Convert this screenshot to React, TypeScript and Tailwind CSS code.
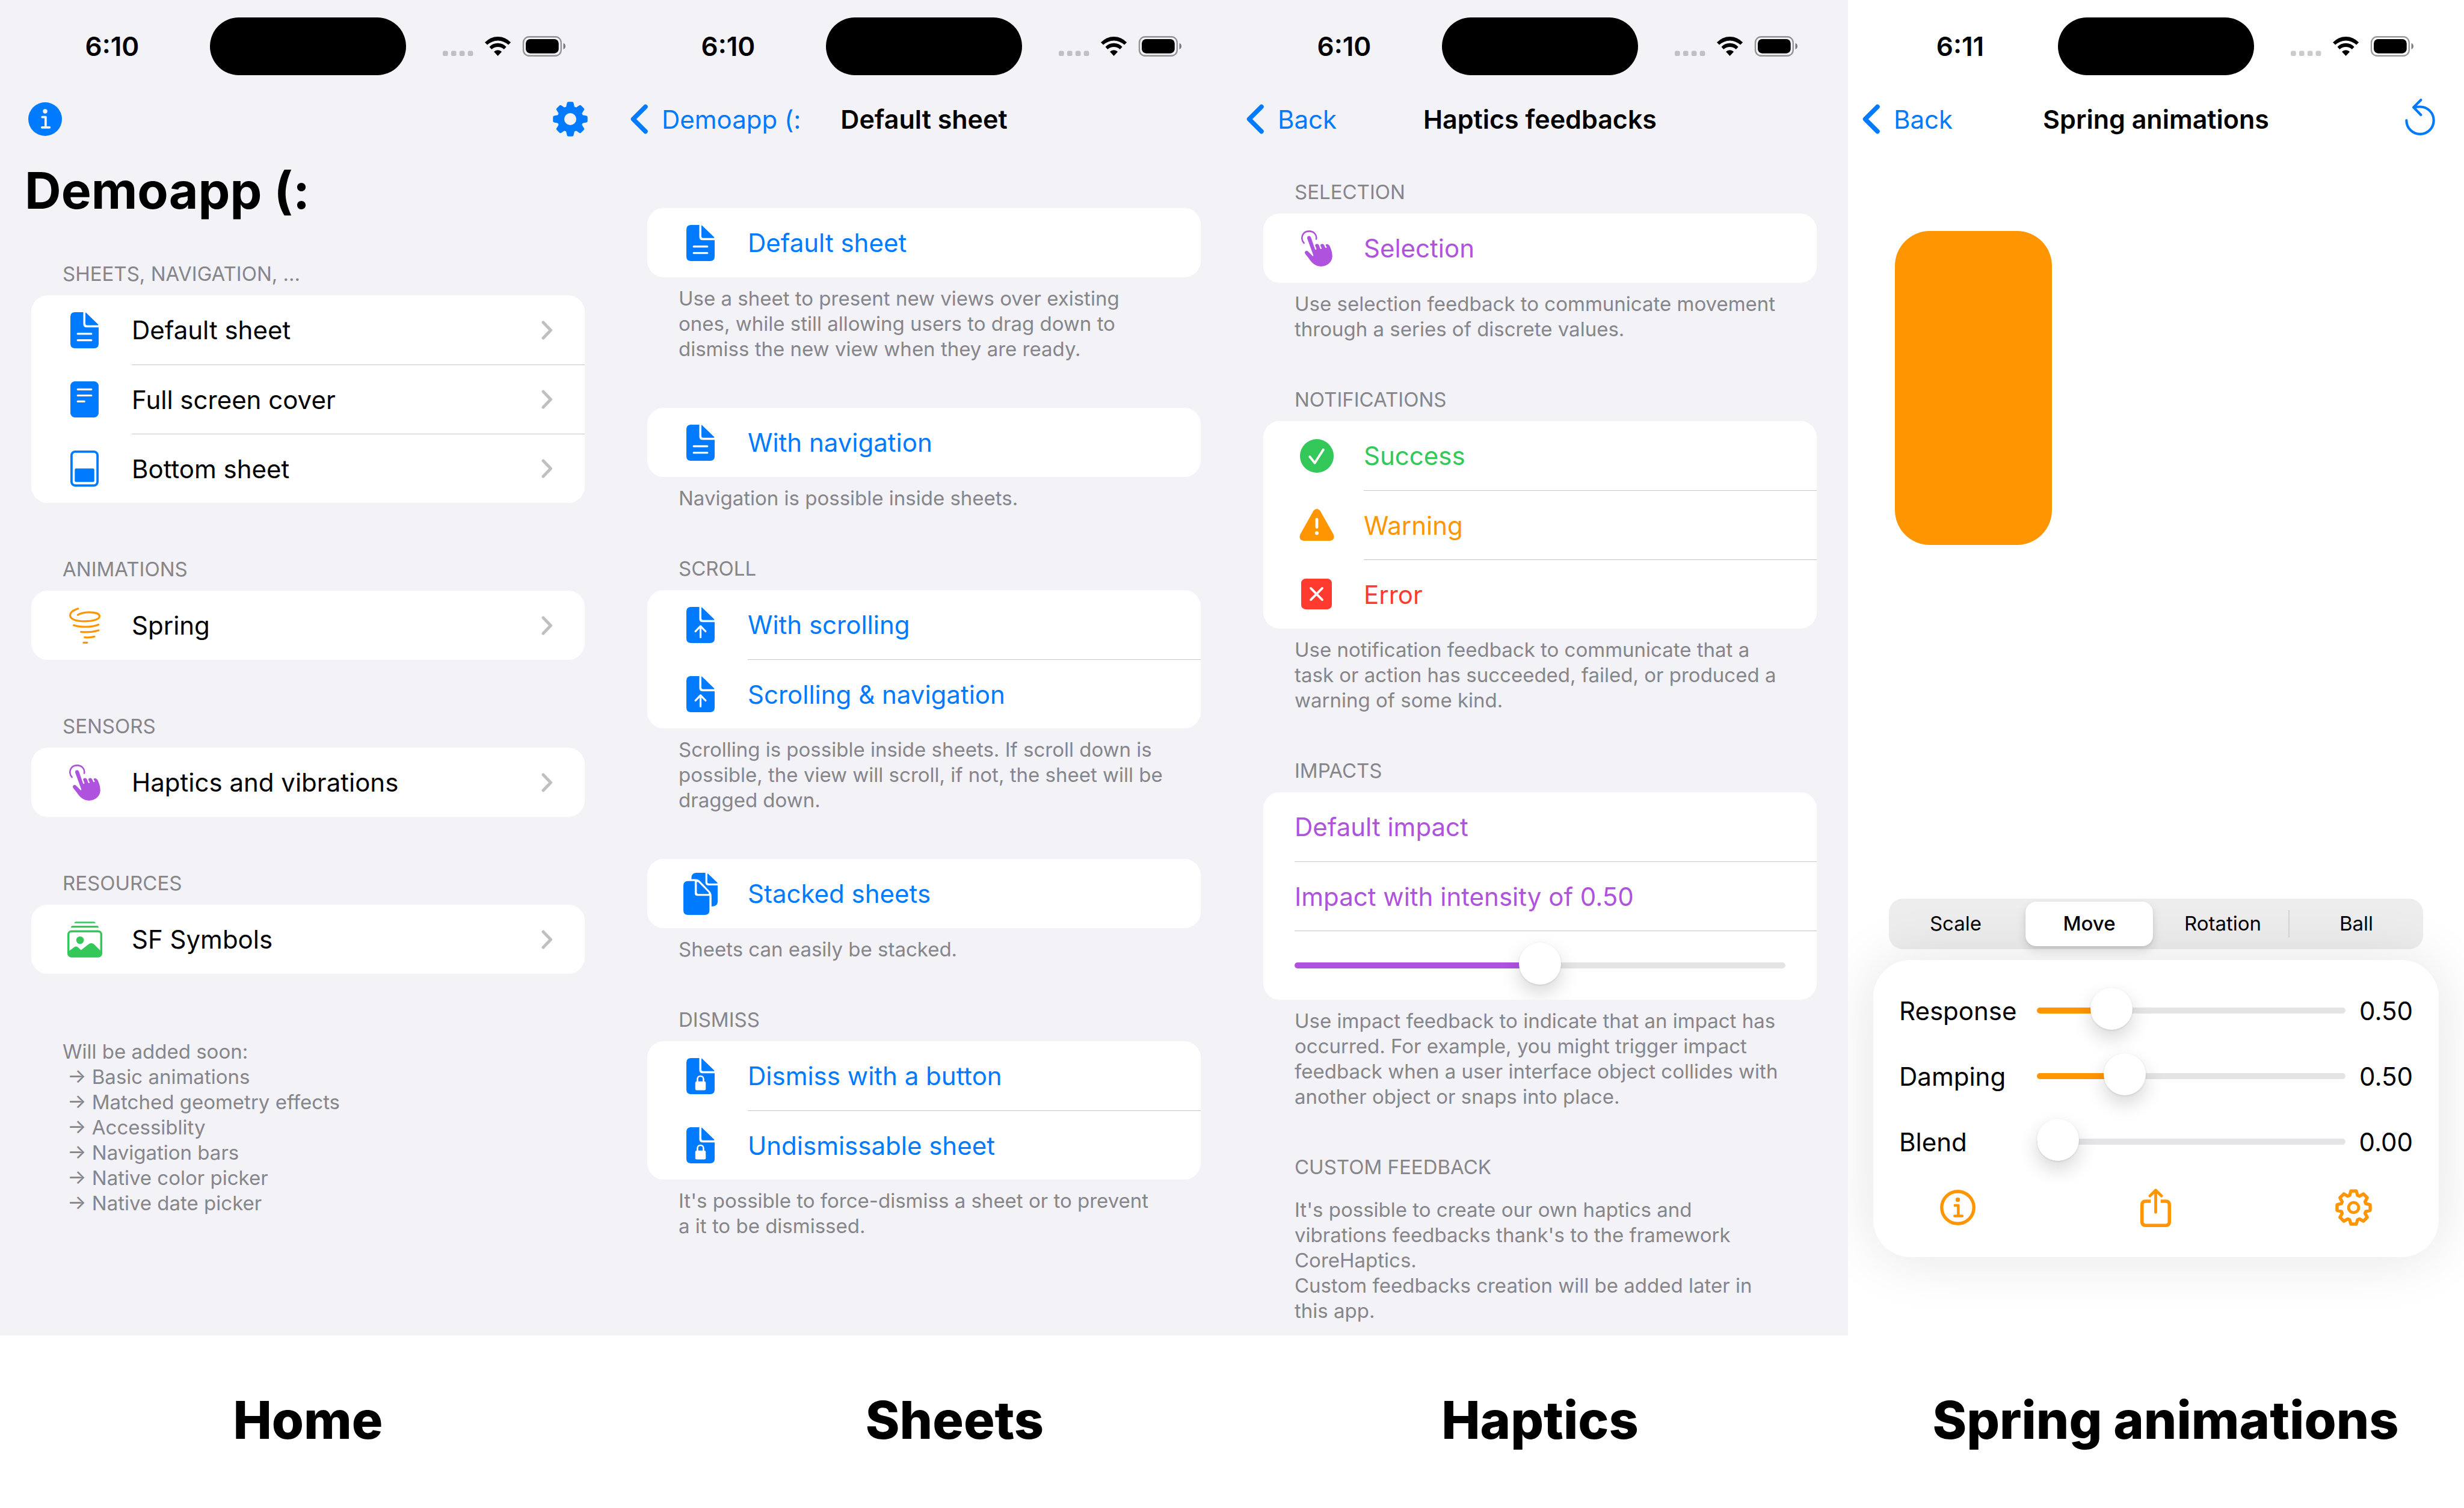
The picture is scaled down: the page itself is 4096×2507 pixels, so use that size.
import React, { useState } from "react";
import type { CSSProperties, ReactNode } from "react";

/* ---------- Icons ---------- */

function DocShape({ children }: { children?: ReactNode }) {
  return (
    <svg viewBox="0 0 162 207" className="h-[60px] w-[47px]" aria-hidden="true">
      <g fill="currentColor">
        <path d="M26 0H74V68Q74 87 93 87H162V181Q162 207 136 207H26Q0 207 0 181V26Q0 0 26 0Z" />
        <path d="M86 4Q87 0 91 4L158 69Q163 75 156 75H96Q86 75 86 65Z" />
      </g>
      {children}
    </svg>
  );
}

function DocTextIcon() {
  return (
    <DocShape>
      <path d="M42 124H120M42 161H120" stroke="#fff" strokeWidth="11" strokeLinecap="round" />
    </DocShape>
  );
}

function DocArrowIcon() {
  return (
    <DocShape>
      <path
        d="M81 174V112M52 140L81 110L110 140"
        fill="none"
        stroke="#fff"
        strokeWidth="11"
        strokeLinecap="round"
        strokeLinejoin="round"
      />
    </DocShape>
  );
}

function DocLockIcon() {
  return (
    <DocShape>
      <rect x="51" y="134" width="60" height="51" rx="8" fill="#fff" />
      <path d="M63.500 136V120C63.500 98 98 98 98 120V136" fill="none" stroke="#fff" strokeWidth="9" />
    </DocShape>
  );
}

function DocStackIcon() {
  return (
    <svg viewBox="0 0 196 241" className="h-[70px] w-[57px]" fill="currentColor" aria-hidden="true">
      <path d="M46 36V28Q48 0 74 0H126V56Q126 72 142 72H196V168Q194 193 161 193V132Q161 116 150 105L98 50Q86 36 68 36Z" />
      <path d="M137 6Q138 2 142 6L194 56Q198 61 191 61H146Q137 61 137 52Z" />
      <path d="M26 47H65V116Q65 132 81 132H149V215Q149 241 123 241H26Q0 241 0 215V73Q0 47 26 47Z" />
      <path d="M77 54Q80 48 87 55L143 112Q149 121 140 121H87Q77 121 77 111Z" />
    </svg>
  );
}

function PortraitTextIcon() {
  return (
    <svg viewBox="0 0 162 207" className="h-[60px] w-[47px]" aria-hidden="true">
      <rect width="162" height="207" rx="26" fill="currentColor" />
      <path d="M42 46H120M42 81H120M42 115H80" stroke="#fff" strokeWidth="11" strokeLinecap="round" />
    </svg>
  );
}

function BottomHalfIcon() {
  return (
    <svg viewBox="0 0 162 207" className="h-[60px] w-[47px]" aria-hidden="true">
      <rect x="6.500" y="6.500" width="149" height="194" rx="21" fill="none" stroke="currentColor" strokeWidth="13" />
      <rect x="25" y="103" width="112" height="77" rx="7" fill="currentColor" />
    </svg>
  );
}

function TornadoIcon() {
  return (
    <svg
      viewBox="66 63 180 207"
      className="h-[60px] w-[52px]"
      fill="none"
      stroke="currentColor"
      strokeWidth="11"
      strokeLinecap="round"
      aria-hidden="true"
    >
      <path d="M117 69C92 77 71.500 90 71.500 107C71.500 130 105 142 155 142C205 142 240.500 130 240.500 113C240.500 97 213 90 181 90C153 90 131 96 116 105" />
      <path d="M92 165C130 177 195 177 234 161M134 203C170 206 205 203 235 194M155 234Q185 237 211 230M149 265H169" />
    </svg>
  );
}

function HandTapIcon() {
  return (
    <svg viewBox="66 963 181 208" className="h-[60px] w-[52px]" aria-hidden="true">
      <path
        d="M82 1036C60 1010 71 967.500 112 967.500C141 967.500 158 990 153 1013"
        fill="none"
        stroke="currentColor"
        strokeWidth="9"
        strokeLinecap="round"
      />
      <path
        fill="currentColor"
        d="M101 1010C98 992 119 990 123 1004L146 1071C148 1077 155 1075 154 1069L147 1051C145 1041 160 1037 167 1045C171 1050 173 1060 176 1067C179 1073 185 1071 184 1065L177 1050C176 1041 191 1037 197 1045C202 1051 203 1058 206 1062C210 1066 215 1064 213 1058L207 1047C209 1041 221 1040 229 1050C239 1068 247 1095 246 1115C244 1148 215 1171 180 1171C150 1171 130 1152 118 1136C107 1121 97 1108 88 1096C83 1085 97 1076 106 1084L131 1110C136 1114 138 1110 136 1105Z"
      />
    </svg>
  );
}

function PhotoStackIcon() {
  return (
    <svg viewBox="0 0 201 207" className="h-[60px] w-[58px]" aria-hidden="true">
      <path fill="currentColor" d="M40 9Q41 0 50 0H152Q161 0 162 9ZM20 35Q21 24 31 24H170Q179 24 181 35Z" />
      <rect x="6" y="56" width="189" height="145" rx="18" fill="none" stroke="currentColor" strokeWidth="12" />
      <circle cx="73" cy="107" r="22" fill="currentColor" />
      <path
        fill="currentColor"
        d="M6 172L39 148Q50 139 61 148L79 164L121 131Q138 117 154 131L195 172V186Q195 201 180 201H21Q6 201 6 186Z"
      />
    </svg>
  );
}

function CheckCircleIcon() {
  return (
    <svg viewBox="0 0 65 65" className="size-[56px]" aria-hidden="true">
      <circle cx="32.500" cy="32.500" r="32.500" fill="currentColor" />
      <path
        d="M19 34L28.500 46L45 20.500"
        fill="none"
        stroke="#fff"
        strokeWidth="4.500"
        strokeLinecap="round"
        strokeLinejoin="round"
      />
    </svg>
  );
}

function WarningIcon() {
  return (
    <svg viewBox="0 0 67 61" className="h-[53px] w-[58px]" aria-hidden="true">
      <path
        fill="currentColor"
        d="M27 3.500Q33.500 -3.500 40 3.500L65.500 49Q69 60 59 61H8Q-2 60 1.500 49Z"
      />
      <path d="M33.500 20V35" stroke="#fff" strokeWidth="5.500" strokeLinecap="round" />
      <circle cx="33.500" cy="46.500" r="3.500" fill="#fff" />
    </svg>
  );
}

function ErrorIcon() {
  return (
    <svg viewBox="0 0 59 59" className="size-[51px]" aria-hidden="true">
      <rect width="59" height="59" rx="8.500" fill="currentColor" />
      <path d="M18.500 18.500L40.500 40.500M40.500 18.500L18.500 40.500" stroke="#fff" strokeWidth="4.500" strokeLinecap="round" />
    </svg>
  );
}

function InfoGlyph({ color, width }: { color: string; width: number }) {
  return (
    <>
      <circle cx="32.500" cy="17.500" r="4.300" fill={color} />
      <path
        d="M27 28.500H33.500V48.500M26.500 48.500H41"
        fill="none"
        stroke={color}
        strokeWidth={width}
        strokeLinecap="round"
        strokeLinejoin="round"
      />
    </>
  );
}

function InfoFilledIcon() {
  return (
    <svg viewBox="0 0 65 65" className="size-[56px]" aria-hidden="true">
      <circle cx="32.500" cy="32.500" r="32.500" fill="currentColor" />
      <InfoGlyph color="#f2f2f7" width={4.4} />
    </svg>
  );
}

function InfoOutlineIcon() {
  return (
    <svg viewBox="-1.500 -1.500 68 68" className="size-[59px]" aria-hidden="true">
      <circle cx="32.500" cy="32.500" r="30.800" fill="none" stroke="currentColor" strokeWidth="6.200" />
      <InfoGlyph color="currentColor" width={5.2} />
    </svg>
  );
}

const TEETH = [0, 45, 90, 135, 180, 225, 270, 315];

function GearFilledIcon() {
  return (
    <svg viewBox="-101 -101 202 202" className="size-[58px]" aria-hidden="true">
      <circle r="55" fill="none" stroke="currentColor" strokeWidth="40" />
      {TEETH.map((angle) => (
        <path
          key={angle}
          transform={`rotate(${angle})`}
          fill="currentColor"
          d="M-28 -64Q-24 -70 -23 -76L-19 -94Q-17 -100 -11 -100H11Q17 -100 19 -94L23 -76Q24 -70 28 -64Z"
        />
      ))}
    </svg>
  );
}

function gearOutline(): string {
  const profile = [
    [-7.6, -23.2],
    [-5.2, -31.6],
    [5.2, -31.6],
    [7.6, -23.2],
  ];
  const points = TEETH.flatMap((angle) => {
    const a = (angle * Math.PI) / 180;
    return profile.map(
      ([x, y]) =>
        `${(x * Math.cos(a) - y * Math.sin(a)).toFixed(2)} ${(x * Math.sin(a) + y * Math.cos(a)).toFixed(2)}`,
    );
  });
  return `M${points.join("L")}Z`;
}

function GearOutlineIcon() {
  return (
    <svg
      viewBox="-35 -35 70 70"
      className="size-[61px]"
      fill="none"
      stroke="currentColor"
      strokeLinejoin="round"
      aria-hidden="true"
    >
      <path d={gearOutline()} strokeWidth="6.200" />
      <circle r="9.600" strokeWidth="5.500" />
    </svg>
  );
}

function ShareIcon() {
  return (
    <svg
      viewBox="0 0 59 74"
      className="h-[64px] w-[51px]"
      fill="none"
      stroke="currentColor"
      strokeLinejoin="round"
      aria-hidden="true"
    >
      <path d="M20 24.200H10.200Q3.200 24.200 3.200 31.200V63.800Q3.200 70.800 10.200 70.800H48.800Q55.800 70.800 55.800 63.800V31.200Q55.800 24.200 48.800 24.200H39" strokeWidth="6.400" />
      <path d="M29.500 45.500V4M18.500 14L29.500 3.200L40.500 14" strokeWidth="5.600" strokeLinecap="round" />
    </svg>
  );
}

function RestartIcon() {
  return (
    <svg
      viewBox="0 0 57 70"
      className="h-[61px] w-[50px]"
      fill="none"
      stroke="currentColor"
      strokeWidth="4.800"
      strokeLinecap="round"
      strokeLinejoin="round"
      aria-hidden="true"
    >
      <path d="M2.500 41.500A26 26 0 1 0 28.500 15.500Q22 15.500 16.500 17" />
      <path d="M30 2.500L16 16.500L30 31" />
    </svg>
  );
}

function BackChevron() {
  return (
    <svg viewBox="0 0 30 50" className="h-[50px] w-[30px]" aria-hidden="true">
      <path
        d="M25 4.500L4.500 25L25 45.500"
        fill="none"
        stroke="currentColor"
        strokeWidth="7.500"
        strokeLinecap="round"
        strokeLinejoin="round"
      />
    </svg>
  );
}

function DisclosureChevron() {
  return (
    <svg viewBox="0 0 19 32" className="h-[32px] w-[19px]" aria-hidden="true">
      <path
        d="M3 3L15.500 16L3 29"
        fill="none"
        stroke="#c0c0c3"
        strokeWidth="5"
        strokeLinecap="round"
        strokeLinejoin="round"
      />
    </svg>
  );
}

function StatusIcons() {
  return (
    <svg viewBox="0 0 705 117" className="h-[34px] w-[204px]" aria-label="Wi-Fi on, battery full" role="img">
      <g opacity="0.200">
        <rect x="0" y="84" width="30" height="30" rx="10" />
        <rect x="48" y="84" width="30" height="30" rx="10" />
        <rect x="96" y="84" width="30" height="30" rx="10" />
        <rect x="144" y="84" width="30" height="30" rx="10" />
      </g>
      <g transform="translate(241 2)">
        <path d="M1 34A101 101 0 0 1 150 34L136 48A88 88 0 0 0 15 48Z" />
        <path d="M27 60A65 65 0 0 1 124 60L111 74A52 52 0 0 0 40 74Z" />
        <path d="M53 88A30 30 0 0 1 98 88L75.500 112Z" />
      </g>
      <g transform="translate(459 0)">
        <rect x="4" y="4" width="217" height="109" rx="33" fill="none" stroke="#000" strokeOpacity="0.400" strokeWidth="8" />
        <rect x="18" y="17" width="189" height="82" rx="25" />
        <path d="M234 40Q246 45 246 58Q246 71 234 76Z" opacity="0.500" />
      </g>
    </svg>
  );
}

/* ---------- Screen chrome ---------- */

function StatusBar({ time }: { time: string }) {
  return (
    <div className="flex h-[154px] shrink-0 items-start px-6 pt-[29px]">
      <div className="flex h-[96px] flex-1 items-center justify-center text-[44px] font-semibold">{time}</div>
      <div className="h-[96px] w-[326px] rounded-full bg-black" />
      <div className="flex h-[96px] flex-1 items-center justify-center">
        <StatusIcons />
      </div>
    </div>
  );
}

function NavBar({ back, title, action }: { back: string; title: string; action?: ReactNode }) {
  return (
    <header className="grid h-[88px] shrink-0 grid-cols-[1fr_auto_1fr] items-center px-6">
      <button type="button" className="flex items-center gap-[22px] text-[42px] text-[#007aff]">
        <BackChevron />
        {back}
      </button>
      <h1 className="text-[43px] font-semibold">{title}</h1>
      <div className="flex justify-end pr-6 text-[#007aff]">{action}</div>
    </header>
  );
}

function Screen({ white, children }: { white?: boolean; children: ReactNode }) {
  return (
    <section className={`flex aspect-[393/852] flex-col overflow-hidden ${white ? "bg-white" : "bg-[#f2f2f7]"}`}>
      {children}
    </section>
  );
}

/* ---------- Grouped lists ---------- */

function SectionHeader({ children }: { children: ReactNode }) {
  return (
    <h2 className="px-[52px] pb-[15px] text-[33px] leading-[42px] uppercase text-[#85858a]">{children}</h2>
  );
}

function SectionFooter({ lines }: { lines: string[] }) {
  return (
    <p className="whitespace-pre-line pl-[52px] pr-10 pt-[14px] text-[33px] leading-[42px] text-[#85858a]">
      {lines.join("\n")}
    </p>
  );
}

function Card({ children }: { children: ReactNode }) {
  return <div className="overflow-hidden rounded-[27px] bg-white">{children}</div>;
}

type Tone = "black" | "blue" | "orange" | "purple" | "green" | "red";

const TONES: Record<Tone, string> = {
  black: "text-black",
  blue: "text-[#007aff]",
  orange: "text-[#ff9500]",
  purple: "text-[#af52de]",
  green: "text-[#34c759]",
  red: "text-[#ff3b30]",
};

type RowProps = {
  icon: ReactNode;
  label: string;
  tone: Tone;
  textTone?: Tone;
  link?: boolean;
  divided?: boolean;
};

function Row({ icon, label, tone, textTone, link, divided }: RowProps) {
  const content = (
    <>
      <span className={`flex w-[73px] shrink-0 items-center justify-center ${TONES[tone]}`}>{icon}</span>
      <span
        className={`ml-[42px] flex h-full flex-1 items-center justify-between pr-[53px] text-left text-[42px] ${
          divided ? "border-t border-[#c6c6c8]" : ""
        } ${TONES[textTone ?? tone]}`}
      >
        {label}
        {link && <DisclosureChevron />}
      </span>
    </>
  );
  const shape = "flex h-[115px] w-full items-center pl-[52px]";
  return link ? (
    <a href="#" className={shape}>
      {content}
    </a>
  ) : (
    <button type="button" className={shape}>
      {content}
    </button>
  );
}

function TextRow({ label, divided }: { label: string; divided?: boolean }) {
  return (
    <button type="button" className="flex h-[115px] w-full pl-[52px] text-[42px] text-[#af52de]">
      <span className={`flex h-full flex-1 items-center ${divided ? "border-t border-[#c6c6c8]" : ""}`}>{label}</span>
    </button>
  );
}

type SliderProps = {
  id?: string;
  label?: string;
  max: number;
  value: number;
  color: string;
  onChange: (value: number) => void;
};

function Slider({ id, label, max, value, color, onChange }: SliderProps) {
  const knob = `calc(35px + ${value / max} * (100% - 70px))`;
  const style = {
    "--track": `linear-gradient(to right, ${color} ${knob}, #e4e4e6 ${knob})`,
  } as CSSProperties;
  return (
    <input
      id={id}
      aria-label={label}
      type="range"
      min={0}
      max={max}
      step={0.01}
      value={value}
      onChange={(e) => onChange(Number(e.target.value))}
      style={style}
      className="h-[70px] w-full appearance-none bg-transparent [&::-webkit-slider-runnable-track]:h-[10px] [&::-webkit-slider-runnable-track]:rounded-full [&::-webkit-slider-runnable-track]:[background:var(--track)] [&::-webkit-slider-thumb]:mt-[-33px] [&::-webkit-slider-thumb]:size-[70px] [&::-webkit-slider-thumb]:appearance-none [&::-webkit-slider-thumb]:rounded-full [&::-webkit-slider-thumb]:bg-white [&::-webkit-slider-thumb]:shadow-[0_1px_3px_rgba(0,0,0,0.12),0_14px_32px_rgba(0,0,0,0.16)]"
    />
  );
}

/* ---------- Screens ---------- */

function HomeScreen() {
  return (
    <Screen>
      <StatusBar time="6:10" />
      <header className="flex h-[88px] shrink-0 items-center justify-between px-[47px] text-[#007aff]">
        <button type="button" aria-label="About">
          <InfoFilledIcon />
        </button>
        <button type="button" aria-label="Settings">
          <GearFilledIcon />
        </button>
      </header>
      <h1 className="mt-[22px] px-[41px] text-[84px] leading-[106px] font-bold">Demoapp (:</h1>
      <div className="mt-16 flex flex-col gap-[89px] px-[52px]">
        <div>
          <SectionHeader>Sheets, navigation, ...</SectionHeader>
          <Card>
            <Row link icon={<DocTextIcon />} label="Default sheet" tone="blue" textTone="black" />
            <Row link divided icon={<PortraitTextIcon />} label="Full screen cover" tone="blue" textTone="black" />
            <Row link divided icon={<BottomHalfIcon />} label="Bottom sheet" tone="blue" textTone="black" />
          </Card>
        </div>
        <div>
          <SectionHeader>Animations</SectionHeader>
          <Card>
            <Row link icon={<TornadoIcon />} label="Spring" tone="orange" textTone="black" />
          </Card>
        </div>
        <div>
          <SectionHeader>Sensors</SectionHeader>
          <Card>
            <Row link icon={<HandTapIcon />} label="Haptics and vibrations" tone="purple" textTone="black" />
          </Card>
        </div>
        <div>
          <SectionHeader>Resources</SectionHeader>
          <Card>
            <Row link icon={<PhotoStackIcon />} label="SF Symbols" tone="green" textTone="black" />
          </Card>
        </div>
      </div>
      <div className="mt-[108px] px-[104px] text-[33px] leading-[42px] text-[#85858a]">
        <p>Will be added soon:</p>
        <ul className="pl-2">
          <li>→ Basic animations</li>
          <li>→ Matched geometry effects</li>
          <li>→ Accessiblity</li>
          <li>→ Navigation bars</li>
          <li>→ Native color picker</li>
          <li>→ Native date picker</li>
        </ul>
      </div>
    </Screen>
  );
}

function SheetsScreen() {
  return (
    <Screen>
      <StatusBar time="6:10" />
      <NavBar back="Demoapp (:" title="Default sheet" />
      <div className="mt-[104px] flex flex-col px-[52px]">
        <Card>
          <Row icon={<DocTextIcon />} label="Default sheet" tone="blue" />
        </Card>
        <SectionFooter
          lines={[
            "Use a sheet to present new views over existing",
            "ones, while still allowing users to drag down to",
            "dismiss the new view when they are ready.",
          ]}
        />
        <div className="mt-[77px]">
          <Card>
            <Row icon={<DocTextIcon />} label="With navigation" tone="blue" />
          </Card>
          <SectionFooter lines={["Navigation is possible inside sheets."]} />
        </div>
        <div className="mt-[75px]">
          <SectionHeader>Scroll</SectionHeader>
          <Card>
            <Row icon={<DocArrowIcon />} label="With scrolling" tone="blue" />
            <Row divided icon={<DocArrowIcon />} label="Scrolling & navigation" tone="blue" />
          </Card>
          <SectionFooter
            lines={[
              "Scrolling is possible inside sheets. If scroll down is",
              "possible, the view will scroll, if not, the sheet will be",
              "dragged down.",
            ]}
          />
        </div>
        <div className="mt-[77px]">
          <Card>
            <Row icon={<DocStackIcon />} label="Stacked sheets" tone="blue" />
          </Card>
          <SectionFooter lines={["Sheets can easily be stacked."]} />
        </div>
        <div className="mt-[75px]">
          <SectionHeader>Dismiss</SectionHeader>
          <Card>
            <Row icon={<DocLockIcon />} label="Dismiss with a button" tone="blue" />
            <Row divided icon={<DocLockIcon />} label="Undismissable sheet" tone="blue" />
          </Card>
          <SectionFooter
            lines={["It's possible to force-dismiss a sheet or to prevent", "a it to be dismissed."]}
          />
        </div>
      </div>
    </Screen>
  );
}

function HapticsScreen() {
  const [intensity, setIntensity] = useState(0.5);
  return (
    <Screen>
      <StatusBar time="6:10" />
      <NavBar back="Back" title="Haptics feedbacks" />
      <div className="mt-[56px] flex flex-col gap-[75px] px-[52px]">
        <div>
          <SectionHeader>Selection</SectionHeader>
          <Card>
            <Row icon={<HandTapIcon />} label="Selection" tone="purple" />
          </Card>
          <SectionFooter
            lines={["Use selection feedback to communicate movement", "through a series of discrete values."]}
          />
        </div>
        <div>
          <SectionHeader>Notifications</SectionHeader>
          <Card>
            <Row icon={<CheckCircleIcon />} label="Success" tone="green" />
            <Row divided icon={<WarningIcon />} label="Warning" tone="orange" />
            <Row divided icon={<ErrorIcon />} label="Error" tone="red" />
          </Card>
          <SectionFooter
            lines={[
              "Use notification feedback to communicate that a",
              "task or action has succeeded, failed, or produced a",
              "warning of some kind.",
            ]}
          />
        </div>
        <div>
          <SectionHeader>Impacts</SectionHeader>
          <Card>
            <TextRow label="Default impact" />
            <TextRow divided label={`Impact with intensity of ${intensity.toFixed(2)}`} />
            <div className="pl-[52px]">
              <div className="flex h-[115px] items-center border-t border-[#c6c6c8] pr-[52px]">
                <Slider label="Impact intensity" max={1} value={intensity} color="#af52de" onChange={setIntensity} />
              </div>
            </div>
          </Card>
          <SectionFooter
            lines={[
              "Use impact feedback to indicate that an impact has",
              "occurred. For example, you might trigger impact",
              "feedback when a user interface object collides with",
              "another object or snaps into place.",
            ]}
          />
        </div>
        <div>
          <SectionHeader>Custom feedback</SectionHeader>
          <SectionFooter
            lines={[
              "It's possible to create our own haptics and",
              "vibrations feedbacks thank's to the framework",
              "CoreHaptics.",
              "Custom feedbacks creation will be added later in",
              "this app.",
            ]}
          />
        </div>
      </div>
    </Screen>
  );
}

const MODES = ["Scale", "Move", "Rotation", "Ball"];

function SpringScreen() {
  const [mode, setMode] = useState("Move");
  const [params, setParams] = useState([
    { name: "Response", max: 2.5, value: 0.5 },
    { name: "Damping", max: 2, value: 0.5 },
    { name: "Blend", max: 2, value: 0 },
  ]);
  return (
    <Screen white>
      <StatusBar time="6:11" />
      <NavBar
        back="Back"
        title="Spring animations"
        action={
          <button type="button" aria-label="Restart" className="-mt-2">
            <RestartIcon />
          </button>
        }
      />
      <div className="mt-[142px] flex-1 px-[78px]">
        <div className="h-[522px] w-[261px] rounded-[58px] bg-[#ff9500]" />
      </div>
      <div className="px-[42px] pb-[130px]">
        <div className="mx-[26px] mb-[18px] grid h-[84px] grid-cols-4 rounded-[23px] bg-[#ededee] py-[5px]">
          {MODES.map((name, i) => (
            <div key={name} className="relative flex px-[5px]">
              <button
                type="button"
                aria-pressed={name === mode}
                onClick={() => setMode(name)}
                className={`flex-1 rounded-[18px] text-[33px] ${
                  name === mode
                    ? "bg-white font-medium shadow-[0_8px_16px_rgba(0,0,0,0.12),0_2px_4px_rgba(0,0,0,0.08)]"
                    : ""
                }`}
              >
                {name}
              </button>
              {i === 2 && <span className="absolute right-0 top-[14px] h-[46px] w-[2px] bg-[#d3d3d5]" />}
            </div>
          ))}
        </div>
        <div className="rounded-[62px] bg-white px-[43px] pt-[30px] pb-[50px] shadow-[0_0_100px_rgba(0,0,0,0.11)]">
          {params.map((param, i) => (
            <div key={param.name} className="flex h-[109px] items-center text-[42px]">
              <label htmlFor={param.name} className="w-[229px]">
                {param.name}
              </label>
              <div className="flex flex-1 items-center">
                <Slider
                  id={param.name}
                  max={param.max}
                  value={param.value}
                  color="#ff9500"
                  onChange={(value) => setParams(params.map((p, j) => (j === i ? { ...p, value } : p)))}
                />
              </div>
              <output className="w-[112px] text-right">{param.value.toFixed(2)}</output>
            </div>
          ))}
          <div className="mt-[23px] flex h-[64px] items-center justify-between px-[68px] text-[#ff9500]">
            <button type="button" aria-label="Info">
              <InfoOutlineIcon />
            </button>
            <button type="button" aria-label="Share">
              <ShareIcon />
            </button>
            <button type="button" aria-label="Settings">
              <GearOutlineIcon />
            </button>
          </div>
        </div>
      </div>
    </Screen>
  );
}

/* ---------- Page ---------- */

export default function App() {
  return (
    <main className="min-h-screen bg-white font-['Inter',sans-serif] text-black">
      <div className="grid grid-cols-4">
        <HomeScreen />
        <SheetsScreen />
        <HapticsScreen />
        <SpringScreen />
      </div>
      <div className="grid grid-cols-4 pt-[86px] text-center text-[86px] leading-[110px] font-extrabold whitespace-nowrap">
        <p>Home</p>
        <p className="pl-[102px]">Sheets</p>
        <p>Haptics</p>
        <p className="pl-8">Spring animations</p>
      </div>
    </main>
  );
}
